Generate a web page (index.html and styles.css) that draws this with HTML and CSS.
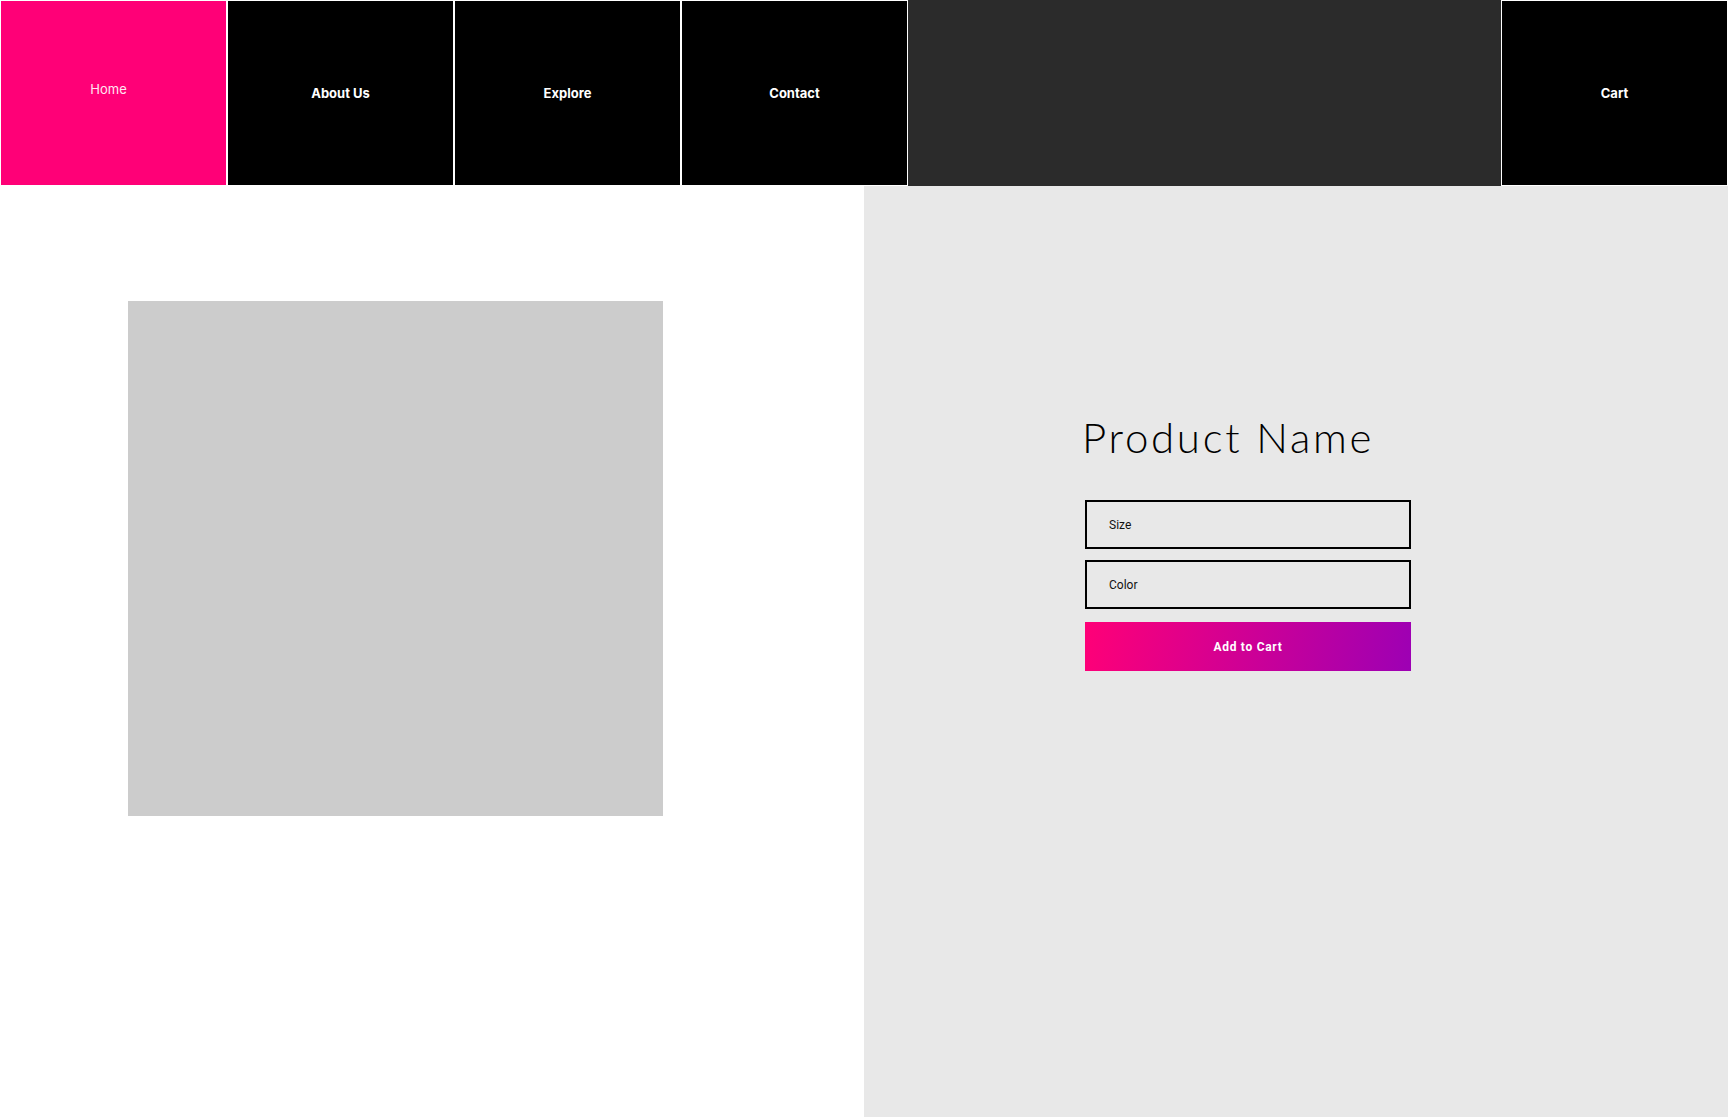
FILE: index.html
```html
<!DOCTYPE html>
<html lang="en">
<head>
<meta charset="utf-8">
<title>Product</title>
<link rel="stylesheet" href="styles.css">
</head>
<body>
<nav class="nav">
  <a class="nav-item nav-home" href="#">Home</a>
  <a class="nav-item" href="#">About Us</a>
  <a class="nav-item" href="#">Explore</a>
  <a class="nav-item" href="#">Contact</a>
  <div class="nav-spacer"></div>
  <a class="nav-item" href="#">Cart</a>
</nav>
<main class="main">
  <section class="gallery">
    <div class="photo"></div>
  </section>
  <section class="details">
    <div class="product">
      <h1 class="title">Product Name</h1>
      <div class="field">Size</div>
      <div class="field">Color</div>
      <button class="add-btn">Add to Cart</button>
    </div>
  </section>
</main>
</body>
</html>
```
FILE: styles.css
```css
* { box-sizing: border-box; }
html, body { margin: 0; padding: 0; }
body {
  font-family: Inter, "Liberation Sans", Arial, sans-serif;
  background: #ffffff;
  width: 1728px;
  height: 1117px;
  overflow: hidden;
}
.nav {
  display: flex;
  height: 186px;
}
.nav-item {
  width: 227px;
  flex: 0 0 227px;
  border: 1px solid #ffffff;
  background: #000000;
  color: #ffffff;
  text-decoration: none;
  font-size: 13px;
  font-weight: 700;
  display: flex;
  align-items: center;
  justify-content: center;
}
.nav-home {
  background: #ff0077;
  font-weight: 400;
  color: #ffe6f1;
  padding: 0 10px 9px 0;
}
.nav-spacer {
  flex: 1;
  background: #2b2b2b;
}
.main {
  display: flex;
  height: 931px;
}
.gallery {
  width: 864px;
  flex: 0 0 864px;
  background: #ffffff;
  padding: 115px 0 0 128px;
}
.photo {
  width: 535px;
  height: 515px;
  background: #cccccc;
}
.details {
  flex: 1;
  background: #e8e8e8;
  padding: 227px 0 0 220px;
}
.product {
  width: 327px;
  display: flex;
  flex-direction: column;
}
.title {
  margin: 0 0 39px -2px;
  font-family: Lato, "Open Sans", sans-serif;
  font-weight: 300;
  font-size: 42px;
  line-height: 48px;
  letter-spacing: 2.7px;
  color: #000000;
  white-space: nowrap;
}
.field {
  height: 49px;
  border: 2px solid #000000;
  padding-left: 22px;
  display: flex;
  align-items: center;
  font-family: Roboto, "Liberation Sans", sans-serif;
  font-size: 12px;
  color: #111111;
  margin-left: 1px;
  margin-bottom: 11px;
}
.field + .field { margin-bottom: 13px; }
.add-btn {
  height: 49px;
  margin-left: 1px;
  border: none;
  background: linear-gradient(100deg, #ff0077 0%, #9d00b4 100%);
  color: #ffffff;
  font-family: Roboto, "Liberation Sans", sans-serif;
  font-weight: 700;
  font-size: 12px;
  letter-spacing: 0.7px;
  cursor: pointer;
}
```
